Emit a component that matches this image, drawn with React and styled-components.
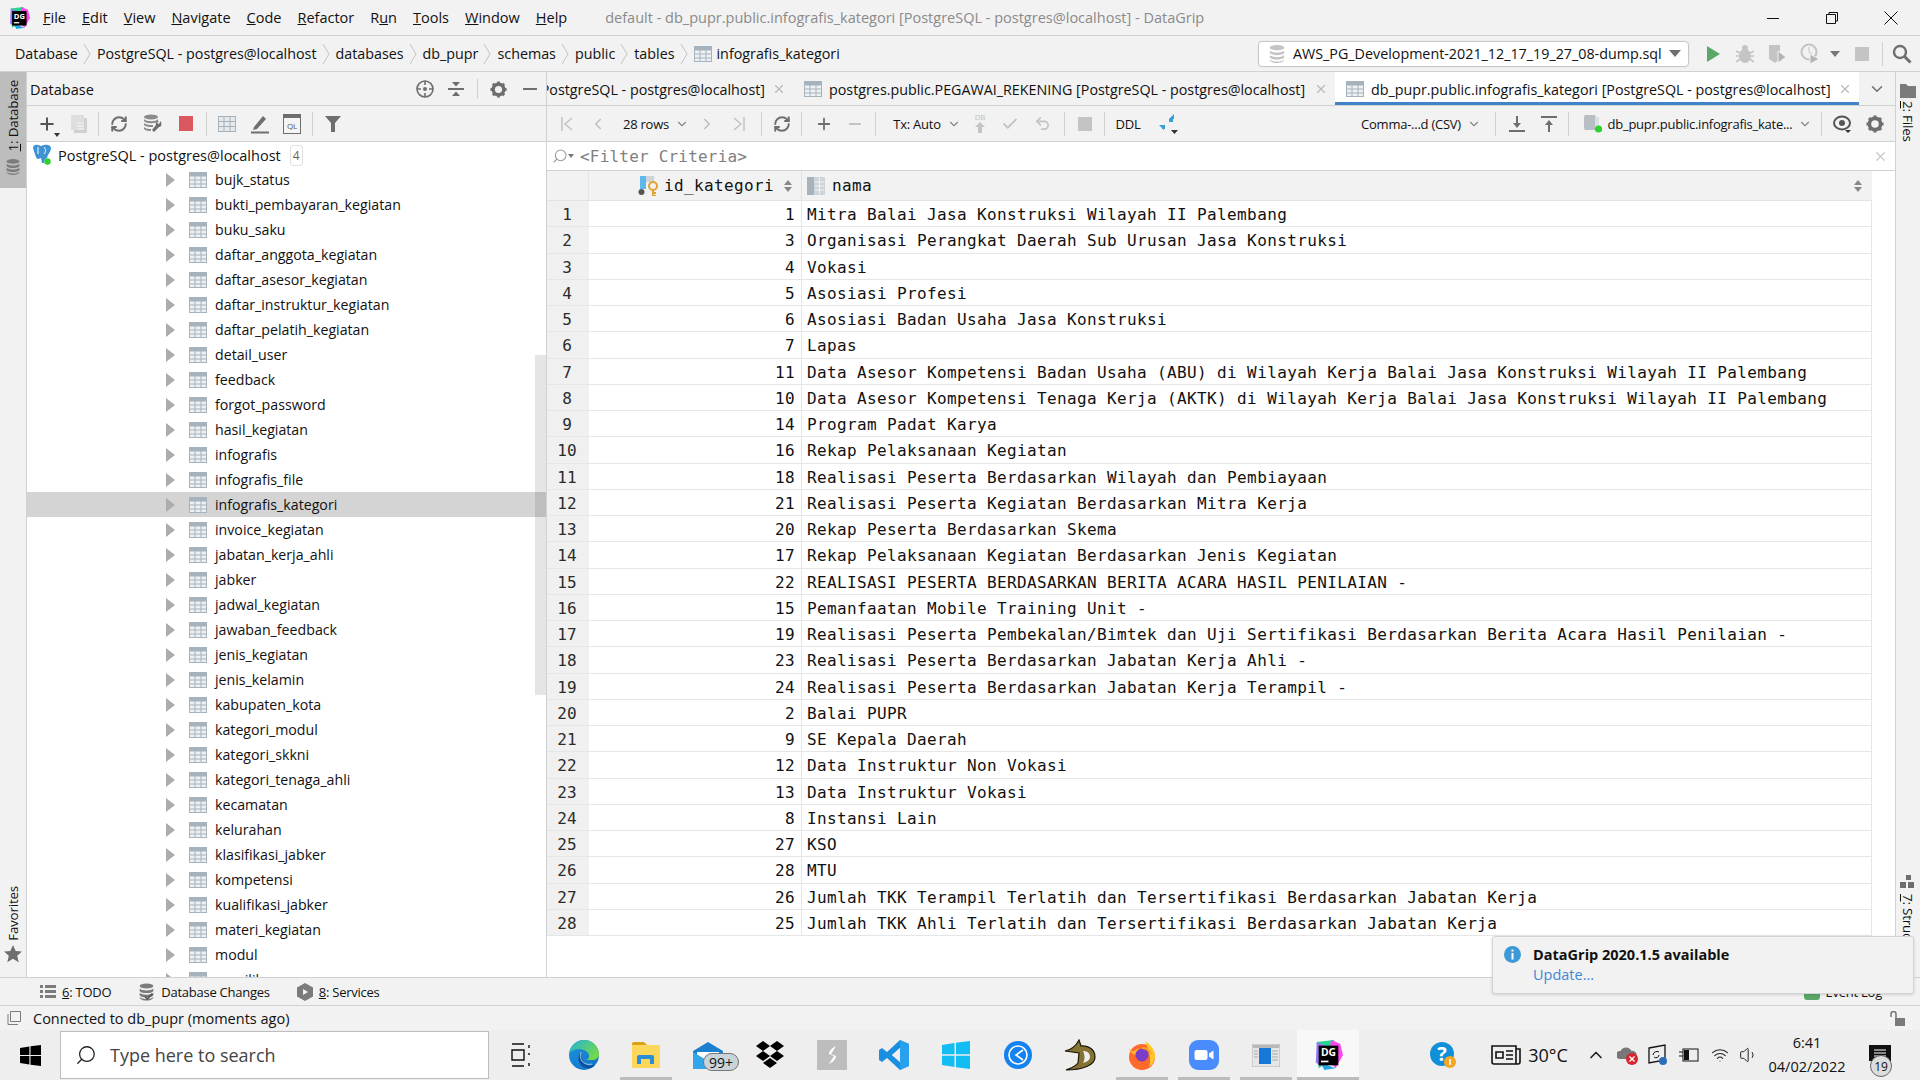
import React from 'react'
import styled, { createGlobalStyle } from 'styled-components'
import { ChevronDown, ChevronRight, ChevronLeft, Plus, Minus, RefreshCw, Check, Undo2, X, Search, ChevronUp, Volume1, Wifi } from 'lucide-react'

const UI = '"Open Sans", "Noto Sans", sans-serif'
const MONO = '"DejaVu Sans Mono", monospace'

const tables = ['bujk_status', 'bukti_pembayaran_kegiatan', 'buku_saku', 'daftar_anggota_kegiatan', 'daftar_asesor_kegiatan', 'daftar_instruktur_kegiatan', 'daftar_pelatih_kegiatan', 'detail_user', 'feedback', 'forgot_password', 'hasil_kegiatan', 'infografis', 'infografis_file', 'infografis_kategori', 'invoice_kegiatan', 'jabatan_kerja_ahli', 'jabker', 'jadwal_kegiatan', 'jawaban_feedback', 'jenis_kegiatan', 'jenis_kelamin', 'kabupaten_kota', 'kategori_modul', 'kategori_skkni', 'kategori_tenaga_ahli', 'kecamatan', 'kelurahan', 'klasifikasi_jabker', 'kompetensi', 'kualifikasi_jabker', 'materi_kegiatan', 'modul', 'pemilik']

const rows = [
  [1, 'Mitra Balai Jasa Konstruksi Wilayah II Palembang'],
  [3, 'Organisasi Perangkat Daerah Sub Urusan Jasa Konstruksi'],
  [4, 'Vokasi'],
  [5, 'Asosiasi Profesi'],
  [6, 'Asosiasi Badan Usaha Jasa Konstruksi'],
  [7, 'Lapas'],
  [11, 'Data Asesor Kompetensi Badan Usaha (ABU) di Wilayah Kerja Balai Jasa Konstruksi Wilayah II Palembang'],
  [10, 'Data Asesor Kompetensi Tenaga Kerja (AKTK) di Wilayah Kerja Balai Jasa Konstruksi Wilayah II Palembang'],
  [14, 'Program Padat Karya'],
  [16, 'Rekap Pelaksanaan Kegiatan'],
  [18, 'Realisasi Peserta Berdasarkan Wilayah dan Pembiayaan'],
  [21, 'Realisasi Peserta Kegiatan Berdasarkan Mitra Kerja'],
  [20, 'Rekap Peserta Berdasarkan Skema'],
  [17, 'Rekap Pelaksanaan Kegiatan Berdasarkan Jenis Kegiatan'],
  [22, 'REALISASI PESERTA BERDASARKAN BERITA ACARA HASIL PENILAIAN -'],
  [15, 'Pemanfaatan Mobile Training Unit -'],
  [19, 'Realisasi Peserta Pembekalan/Bimtek dan Uji Sertifikasi Berdasarkan Berita Acara Hasil Penilaian -'],
  [23, 'Realisasi Peserta Berdasarkan Jabatan Kerja Ahli -'],
  [24, 'Realisasi Peserta Berdasarkan Jabatan Kerja Terampil -'],
  [2, 'Balai PUPR'],
  [9, 'SE Kepala Daerah'],
  [12, 'Data Instruktur Non Vokasi'],
  [13, 'Data Instruktur Vokasi'],
  [8, 'Instansi Lain'],
  [27, 'KSO'],
  [28, 'MTU'],
  [26, 'Jumlah TKK Terampil Terlatih dan Tersertifikasi Berdasarkan Jabatan Kerja'],
  [25, 'Jumlah TKK Ahli Terlatih dan Tersertifikasi Berdasarkan Jabatan Kerja']
]

const GlobalStyle = createGlobalStyle`
  html, body { margin: 0; padding: 0; background: #f2f2f2; overflow: hidden; }
  * { box-sizing: border-box; }
  svg { flex: none; }
`

const Page = styled.div`
  position: relative;
  width: 1920px;
  height: 1080px;
  display: flex;
  flex-direction: column;
  overflow: hidden;
  font-family: ${UI};
  font-size: 14.5px;
  color: #111;
  background: #f2f2f2;
`
const TitleBar = styled.div`
  height: 36px;
  flex: none;
  display: flex;
  align-items: center;
  border-bottom: 1px solid #d1d1d1;
`
const AppIcon = styled.div`
  width: 43px;
  padding-left: 8px;
  display: flex;
`
const Menu = styled.div`
  display: flex;
  gap: 16px;
`
const WindowTitle = styled.div`
  margin-left: 38px;
  color: #8a8a8a;
  white-space: nowrap;
`
const WindowButtons = styled.div`
  margin-left: auto;
  display: flex;
  align-items: center;
`
const WindowButton = styled.div`
  width: 59px;
  display: flex;
  justify-content: center;
`
const NavBar = styled.div`
  height: 36px;
  flex: none;
  display: flex;
  align-items: center;
  padding-left: 15px;
  font-size: 14.3px;
  border-bottom: 1px solid #d1d1d1;
`
const Crumb = styled.span`
  display: flex;
  align-items: center;
  gap: 5px;
  white-space: nowrap;
`
const CrumbSep = styled.svg`
  width: 8px;
  height: 24px;
  margin: 0 6px 0 5px;
`
const RunGroup = styled.div`
  margin-left: auto;
  display: flex;
  align-items: center;
`
const RunConfig = styled.div`
  width: 431px;
  height: 26px;
  display: flex;
  align-items: center;
  gap: 7px;
  padding: 0 12px 0 9px;
  background: #fff;
  border: 1px solid #c8c8c8;
  border-radius: 4px;
  margin-right: 8px;
  white-space: nowrap;
  box-shadow: 0 0 0 1px #ececec;
`
const Caret = styled.span`
  width: 0;
  height: 0;
  flex: none;
  border-left: ${p => p.$s || 6}px solid transparent;
  border-right: ${p => p.$s || 6}px solid transparent;
  border-top: ${p => (p.$s || 6) + 1}px solid ${p => p.$c || '#6e6e6e'};
`
const RunCaret = styled(Caret)`
  margin-left: auto;
`
const Main = styled.div`
  flex: 1;
  min-height: 0;
  display: flex;
`
const Stripe = styled.div`
  width: ${p => p.$w}px;
  flex: none;
  display: flex;
  flex-direction: column;
  justify-content: space-between;
  font-size: 13.4px;
  letter-spacing: -0.2px;
  border-left: ${p => p.$line ? '1px solid #d1d1d1' : '0'};
`
const StripeButton = styled.div`
  display: flex;
  flex-direction: ${p => p.$rev ? 'column-reverse' : 'column'};
  align-items: center;
  gap: ${p => p.$gap || 5}px;
  height: ${p => p.$h}px;
  padding: ${p => p.$pad || '0'};
  overflow: hidden;
  background: ${p => p.$on ? '#bdbdbd' : 'transparent'};
`
const VerticalLabel = styled.span`
  writing-mode: vertical-rl;
  transform: ${p => p.$flip ? 'rotate(180deg)' : 'none'};
  white-space: nowrap;
`
const Panel = styled.div`
  width: 521px;
  flex: none;
  display: flex;
  flex-direction: column;
  border-left: 1px solid #d1d1d1;
  border-right: 1px solid #d1d1d1;
`
const PanelHeader = styled.div`
  height: 34px;
  flex: none;
  display: flex;
  align-items: center;
  padding: 1px 0 0 3px;
  border-bottom: 1px solid #d1d1d1;
`
const HeaderTools = styled.div`
  margin-left: auto;
  display: flex;
  align-items: center;
`
const ToolBar = styled.div`
  height: 36px;
  flex: none;
  display: flex;
  align-items: center;
  padding-left: ${p => p.$pl || 0}px;
  border-bottom: 1px solid #d1d1d1;
  white-space: nowrap;
  font-size: 13px;
  letter-spacing: -0.25px;
`
const Slot = styled.div`
  position: relative;
  width: ${p => p.$w || 32}px;
  flex: none;
  display: flex;
  align-items: center;
  justify-content: center;
  gap: 6px;
  margin-left: ${p => p.$ml || 0}px;
  margin-right: ${p => p.$mr || 0}px;
`
const MiniCaret = styled.span`
  position: absolute;
  right: 3px;
  bottom: -3px;
  width: 0;
  height: 0;
  border-left: 3px solid transparent;
  border-right: 3px solid transparent;
  border-top: 4px solid #333;
`
const Sep = styled.div`
  width: 1px;
  height: ${p => p.$h || 24}px;
  flex: none;
  background: #d1d1d1;
  margin: 0 ${p => p.$mr ?? 4}px 0 ${p => p.$ml ?? 4}px;
`
const Tree = styled.div`
  position: relative;
  flex: 1;
  min-height: 0;
  overflow: hidden;
  background: #fff;
  font-size: 14.2px;
`
const Scrollbar = styled.div`
  position: absolute;
  top: 213px;
  right: 0;
  width: 11px;
  height: 340px;
  background: rgba(0, 0, 0, 0.1);
`
const RootRow = styled.div`
  height: 25px;
  display: flex;
  align-items: center;
  gap: 6px;
  padding: 1px 0 0 5px;
  font-size: 14.5px;
  white-space: nowrap;
`
const CountBadge = styled.span`
  width: 13px;
  height: 21px;
  margin-left: 3px;
  display: flex;
  align-items: center;
  justify-content: center;
  font-size: 12px;
  color: #6f6250;
  border: 1px solid #e0e0e0;
  border-radius: 3px;
`
const TreeRow = styled.div`
  height: 25px;
  display: flex;
  align-items: center;
  padding-left: 139px;
  background: ${p => p.$selected ? '#d4d4d4' : 'transparent'};
`
const Arrow = styled.span`
  width: 0;
  height: 0;
  margin-right: 14px;
  border-top: 7px solid transparent;
  border-bottom: 7px solid transparent;
  border-left: 9px solid #acacac;
`
const TreeLabel = styled.span`
  margin-left: 8px;
`
const Editor = styled.div`
  flex: 1;
  min-width: 0;
  display: flex;
  flex-direction: column;
`
const TabBar = styled.div`
  height: 34px;
  flex: none;
  display: flex;
  border-bottom: 1px solid #d1d1d1;
`
const Tabs = styled.div`
  width: 1312px;
  display: flex;
  justify-content: flex-end;
  overflow: hidden;
  font-size: 14.3px;
`
const Tab = styled.div`
  flex: none;
  height: 34px;
  display: flex;
  align-items: center;
  gap: 7px;
  padding: 0 7px 0 11px;
  white-space: nowrap;
  background: ${p => p.$active ? '#fff' : 'transparent'};
  box-shadow: ${p => p.$active ? 'inset 0 -4px 0 #4083c9' : 'none'};
`
const TabText = styled.span`
  width: ${p => p.$w ? p.$w + 'px' : 'auto'};
  display: block;
`
const TabMenu = styled.div`
  flex: 1;
  display: flex;
  align-items: center;
  justify-content: center;
`
const EditorTools = styled(ToolBar)`
  padding-left: 4px;
`
const RightTools = styled.div`
  margin-left: auto;
  display: flex;
  align-items: center;
`
const FilterBar = styled.div`
  height: 29px;
  flex: none;
  display: flex;
  align-items: center;
  padding: 0 7px 0 5px;
  background: #fff;
  border-bottom: 1px solid #d1d1d1;
  font-family: ${MONO};
  font-size: 16px;
  letter-spacing: 0.2px;
  color: #808080;
`
const FilterText = styled.span`
  margin-left: 6px;
`
const FilterClose = styled.span`
  margin-left: auto;
  display: flex;
`
const FlipSearch = styled(Search)`
  transform: scaleX(-1);
`
const Grid = styled.div`
  flex: 1;
  min-height: 0;
  background: #fff;
  font-family: ${MONO};
  font-size: 16px;
  letter-spacing: 0.37px;
`
const HeadRow = styled.div`
  height: 30px;
  width: 1325px;
  display: flex;
  background: #f2f2f2;
  border-bottom: 1px solid #e2e2e2;
`
const Row = styled.div`
  height: 26.25px;
  display: flex;
  width: 1325px;
`
const Gutter = styled.div`
  width: 42px;
  flex: none;
  display: flex;
  align-items: center;
  justify-content: center;
  padding: 2px 2px 0 0;
  letter-spacing: 0;
  color: #2b2b2b;
  background: #f0f0f0;
  border-bottom: 1px solid #e6e6e6;
`
const IdCell = styled.div`
  width: 213px;
  flex: none;
  display: flex;
  align-items: center;
  justify-content: flex-end;
  padding: 2px 6px 0 0;
  border-right: 1px solid #e6e6e6;
  border-bottom: 1px solid #e6e6e6;
`
const NameCell = styled.div`
  flex: 1;
  display: flex;
  align-items: center;
  padding: 2px 0 0 5px;
  white-space: nowrap;
  border-right: 1px solid #e6e6e6;
  border-bottom: 1px solid #e6e6e6;
`
const HeadId = styled.div`
  width: 213px;
  flex: none;
  display: flex;
  align-items: center;
  justify-content: flex-end;
  gap: 6px;
  padding-right: 9px;
  border-right: 1px solid #e2e2e2;
`
const HeadGutter = styled.div`
  width: 42px;
  flex: none;
  border-right: 1px solid #e6e6e6;
`
const HeadName = styled.div`
  flex: 1;
  display: flex;
  align-items: center;
  gap: 7px;
  padding: 0 10px 0 5px;
`
const SortIcon = styled.svg`
  width: 8px;
  height: 12px;
  margin-left: ${p => p.$auto ? 'auto' : '4px'};
  fill: #888;
`
const BottomBar = styled.div`
  height: 28px;
  flex: none;
  display: flex;
  align-items: center;
  padding-left: 40px;
  gap: 27px;
  border-top: 1px solid #d1d1d1;
  font-size: 13px;
  letter-spacing: -0.25px;
`
const BottomItem = styled.div`
  display: flex;
  align-items: center;
  gap: 6px;
  white-space: nowrap;
`
const EventLog = styled(BottomItem)`
  margin-left: auto;
  padding-right: 38px;
`
const StatusBar = styled.div`
  height: 25px;
  flex: none;
  display: flex;
  align-items: center;
  gap: 12px;
  padding: 0 15px 0 7px;
  border-top: 1px solid #d1d1d1;
`
const LockSlot = styled.span`
  margin-left: auto;
  display: flex;
`
const Popup = styled.div`
  position: absolute;
  left: 1492px;
  top: 936px;
  width: 422px;
  height: 58px;
  padding: 8px 11px;
  display: grid;
  grid-template-columns: 29px 1fr;
  background: #f2f2f2;
  border: 1px solid #d4d4d4;
  border-radius: 3px;
  box-shadow: 0 1px 3px rgba(0, 0, 0, 0.15);
`
const PopupIcon = styled.svg`
  width: 17px;
  height: 17px;
  margin-top: 1px;
`
const PopupTitle = styled.div`
  font-weight: 700;
  line-height: 20px;
`
const PopupLink = styled.div`
  grid-column: 2;
  color: #3f86d4;
  line-height: 20px;
`
const Taskbar = styled.div`
  height: 50px;
  flex: none;
  display: flex;
  background: #eeeeee;
`
const StartButton = styled.div`
  width: 60px;
  display: flex;
  align-items: center;
  justify-content: center;
`
const SearchBox = styled.div`
  width: 429px;
  height: 48px;
  margin-top: 1px;
  display: flex;
  align-items: center;
  gap: 13px;
  padding-left: 14px;
  background: #fff;
  border: 1px solid #bdbdbd;
  font-size: 18px;
  color: #444;
`
const TaskCell = styled.div`
  position: relative;
  width: ${p => p.$w || 62}px;
  flex: none;
  display: flex;
  align-items: center;
  justify-content: center;
  background: ${p => p.$active ? '#f8f8f8' : 'transparent'};
  &::after {
    content: '';
    display: ${p => p.$open ? 'block' : 'none'};
    position: absolute;
    left: ${p => p.$active ? 0 : 5}px;
    right: ${p => p.$active ? 0 : 5}px;
    bottom: 0;
    height: 3px;
    background: #bcbcbc;
  }
`
const Badge = styled.span`
  position: absolute;
  left: 26px;
  bottom: 9px;
  width: 36px;
  height: 18px;
  display: flex;
  align-items: center;
  justify-content: center;
  border-radius: 9px;
  border: 1px solid #777;
  background: #c9d3da;
  font-size: 14px;
  color: #111;
`
const Tray = styled.div`
  margin-left: auto;
  padding-right: 12px;
  display: flex;
  align-items: center;
  font-size: 18px;
`
const TrayItem = styled.div`
  width: ${p => p.$w}px;
  flex: none;
  display: flex;
  justify-content: center;
  align-items: center;
  position: relative;
  margin-left: ${p => p.$ml || 0}px;
`
const Clock = styled.div`
  width: 90px;
  text-align: center;
  font-size: 14.5px;
  line-height: 24px;
`
const NotifyCount = styled.span`
  position: absolute;
  left: 18px;
  top: 10px;
  width: 22px;
  height: 22px;
  display: flex;
  align-items: center;
  justify-content: center;
  border-radius: 50%;
  border: 1px solid #666;
  background: #ddd;
  font-size: 12px;
`

const TableIcon = () => (
  <svg width="18" height="16" viewBox="0 0 18 16">
    <rect width="18" height="16" fill="#a6b2bc" />
    <path d="M1 4.5h4.5v3H1zM6.5 4.5h5v3h-5zM12.5 4.5H17v3h-4.5zM1 8.5h4.5v3H1zM6.5 8.5h5v3h-5zM12.5 8.5H17v3h-4.5zM1 12.5h4.5V15H1zM6.5 12.5h5V15h-5zM12.5 12.5H17V15h-4.5z" fill="#eef1f3" />
  </svg>
)
const LogoDG = ({ s = 22 }) => (
  <svg width={s} height={s} viewBox="0 0 32 32">
    <polygon points="4,2 22,0 27,7 18,22 6,30" fill="#22d88f" />
    <polygon points="19,0 29,4 32,16 24,30 17,22" fill="#ff45ed" />
    <polygon points="4,2 14,6 8,28 3,24" fill="#9775f8" />
    <polygon points="8,24 24,30 12,32" fill="#1fa8e8" />
    <rect x="6" y="6" width="21" height="21" fill="#000" />
    <text x="16.5" y="17" textAnchor="middle" fontSize="11" fontWeight="700" fill="#fff" fontFamily="Open Sans, sans-serif">DG</text>
    <rect x="8.5" y="22" width="8" height="1.8" fill="#fff" />
  </svg>
)
const Elephant = () => (
  <svg width="20" height="22" viewBox="0 0 20 22">
    <path d="M1 4c0-3 3-4 5-3l3 1 3-1c3-1 7 0 7 3 0 3-2 5-3 7l-1 3-2 1-1 4-2 0-1-5-3 1c-2 0-3-5-5-11z" fill="#3e92d6" />
    <path d="M6 3v7M12 3c2 2 2 5 0 7" stroke="#fff" strokeWidth="1" fill="none" />
    <circle cx="15.5" cy="17.5" r="3.2" fill="#2fd12f" />
  </svg>
)
const DbStack = ({ c = '#8e8e8e', w = 20, h = 22, check }) => (
  <svg width={w} height={h} viewBox="0 0 20 22">
    <ellipse cx="10" cy="4" rx="8" ry="3" fill={c} />
    <path d="M2 7c2 3 14 3 16 0v3c-2 3-14 3-16 0zM2 12c2 3 14 3 16 0v3c-2 3-14 3-16 0zM2 17c2 3 14 3 16 0v1c-2 4-14 4-16 0z" fill={c} />
    {check && <path d="M8 16l3 3 6-6" stroke="#555" strokeWidth="2" fill="none" />}
  </svg>
)
const GearIcon = ({ s = 18, c = '#6e6e6e' }) => (
  <svg width={s} height={s} viewBox="0 0 18 18">
    <circle cx="9" cy="9" r="5.6" fill="none" stroke={c} strokeWidth="3.6" />
    <path d="M9 0.5v3.5M9 14v3.5M0.5 9H4M14 9h3.5M3 3l2.5 2.5M12.5 12.5L15 15M15 3l-2.5 2.5M5.5 12.5L3 15" stroke={c} strokeWidth="3" />
  </svg>
)

const EdgeIcon = () => (
  <svg width="32" height="32" viewBox="0 0 32 32">
    <defs>
      <linearGradient id="edgeA" x1="0" y1="0" x2="1" y2="0.6"><stop offset="0" stopColor="#1fb4d8" /><stop offset="1" stopColor="#74d84a" /></linearGradient>
      <linearGradient id="edgeB" x1="0" y1="0" x2="1" y2="1"><stop offset="0" stopColor="#1c95e0" /><stop offset="1" stopColor="#1070c4" /></linearGradient>
    </defs>
    <circle cx="16" cy="16" r="15" fill="url(#edgeB)" />
    <path d="M1.5 13C3 6 9 1 16 1c8 0 15 6 15 14 0 4-3 6-7 6h-6c3-1 4-4 2-7-3-4-10-5-14-3-3 1-4 3-4.5 2z" fill="url(#edgeA)" />
    <path d="M13 13c-3 3-4 9 1 14 4 3 10 3 13-1-5 2-10 0-12-4-2-3-2-6-2-9z" fill="#0b4f9e" />
    <path d="M13 13c-1 3-1 6 1 9 2 3 6 4 10 3" fill="none" stroke="#dfeef5" strokeWidth="1" opacity=".7" />
  </svg>
)
const FolderIcon = () => (
  <svg width="28" height="26" viewBox="0 0 28 26">
    <path d="M0 2a2 2 0 012-2h10l3 3H0z" fill="#dba20f" />
    <rect y="3" width="28" height="23" rx="1" fill="#fdd65c" />
    <path d="M5 22v-7a2 2 0 012-2h13a2 2 0 012 2v7h-4v-5h-9v5z" fill="#2a8fd8" />
  </svg>
)
const MailIcon = () => (
  <svg width="30" height="27" viewBox="0 0 30 27">
    <path d="M0 9L15 0l15 9v18H0z" fill="#1c7fd0" />
    <path d="M4 10h22v6l-11 6-11-6z" fill="#fff" />
    <path d="M0 10l15 9 15-9v17H0z" fill="#33a6ea" />
  </svg>
)
const DropboxIcon = () => (
  <svg width="30" height="28" viewBox="0 0 30 28" fill="#000">
    <polygon points="8,0 15,5 8,10 1,5" />
    <polygon points="22,0 29,5 22,10 15,5" />
    <polygon points="8,10 15,15 8,20 1,15" />
    <polygon points="22,10 29,15 22,20 15,15" />
    <polygon points="15,17 22,22 15,27 8,22" />
  </svg>
)
const SublimeIcon = () => (
  <svg width="30" height="30" viewBox="0 0 30 30">
    <rect width="30" height="30" fill="#bdbdbd" />
    <path d="M19 6c-4 2-7 5-7 8l5 2-5 8c4-2 7-5 7-8l-5-2z" fill="#fff" />
  </svg>
)
const VscodeIcon = () => (
  <svg width="30" height="30" viewBox="0 0 30 30">
    <path d="M21 0l9 4v22l-9 4-13-12-5 4-3-2v-10l3-2 5 4zM21 8l-8 7 8 7z" fill="#1a8ee0" />
    <path d="M21 0l9 4v22l-9 4z" fill="#2aa5f0" opacity=".8" />
    <path d="M21 8l-8 7 8 7z" fill="#eee" />
  </svg>
)
const WinIcon = ({ s = 28, c = '#11bdf2' }) => (
  <svg width={s} height={s} viewBox="0 0 28 28" fill={c}>
    <polygon points="0,4 12.5,2 12.5,13.2 0,13.2" />
    <polygon points="14,1.8 28,0 28,13.2 14,13.2" />
    <polygon points="0,14.8 12.5,14.8 12.5,26 0,24" />
    <polygon points="14,14.8 28,14.8 28,28 14,26.2" />
  </svg>
)
const CircleApp = () => (
  <svg width="28" height="28" viewBox="0 0 28 28">
    <circle cx="14" cy="14" r="14" fill="#1583ef" />
    <circle cx="14" cy="14" r="9" fill="none" stroke="#fff" strokeWidth="1.6" />
    <path d="M19 9l-7 5 7 5" stroke="#fff" strokeWidth="1.6" fill="none" />
  </svg>
)
const GoldIcon = () => (
  <svg width="32" height="32" viewBox="0 0 32 32">
    <path d="M15 1l2 6c8-1 14 4 14 11 0 8-12 13-29 13 5-2 9-3 12-7l1-10L1 12c5-1 10-3 14-11z" fill="#857234" stroke="#1c1606" strokeWidth="1.2" />
    <path d="M19 12c4 0 7 2 7 6 0 3-3 5-7 6 2-3 2-8 0-12z" fill="#eeeeee" />
  </svg>
)
const FirefoxIcon = () => (
  <svg width="30" height="30" viewBox="0 0 30 30">
    <circle cx="15" cy="17" r="13" fill="#ff6a2a" />
    <path d="M18 1c5 3 11 9 10 17-1 4-3 7-6 9 3-8 0-16-4-26z" fill="#ffc62e" />
    <path d="M2 8c2 3 3 3 5 3 3-3 6-3 9-2-4 0-7 3-6 5-3 2-7-1-8-6z" fill="#ffb22e" />
    <circle cx="15" cy="15" r="6.5" fill="#7a3dc8" />
    <path d="M15 7c5 0 9 3 10 8-3-4-6-6-10-6z" fill="#ff9a1c" />
  </svg>
)
const ZoomIcon = () => (
  <svg width="30" height="30" viewBox="0 0 30 30">
    <rect width="30" height="30" rx="9" fill="#4a8cff" />
    <rect x="5.5" y="10" width="13" height="10" rx="2" fill="#fff" />
    <path d="M20 13.5l4.5-3v9l-4.5-3z" fill="#fff" />
  </svg>
)
const WindowAppIcon = () => (
  <svg width="28" height="23" viewBox="0 0 28 23">
    <rect width="28" height="23" fill="#e6e6e6" stroke="#b4b4b4" />
    <rect x="1" y="1" width="26" height="3" fill="#b8b8b8" />
    <rect x="7" y="4" width="12" height="16" fill="#1679d8" />
    <path d="M2 7h4M2 10h4M2 13h4M20 7h6M20 10h6M20 13h6M20 16h6" stroke="#aaa" strokeWidth="1" />
  </svg>
)

const menu = [['F', 'ile'], ['E', 'dit'], ['V', 'iew'], ['N', 'avigate'], ['C', 'ode'], ['R', 'efactor'], ['Ru', 'n', 1], ['T', 'ools'], ['W', 'indow'], ['H', 'elp']]
const crumbs = ['Database', 'PostgreSQL - postgres@localhost', 'databases', 'db_pupr', 'schemas', 'public', 'tables']

const Sep1 = () => (
  <CrumbSep viewBox="0 0 8 24"><path d="M1 2l6 10-6 10" stroke="#c4c4c4" fill="none" /></CrumbSep>
)

export default function App () {
  return (
    <Page>
      <GlobalStyle />
      <TitleBar>
        <AppIcon><LogoDG /></AppIcon>
        <Menu>
          {menu.map(m => (
            <span key={m[0]}>
              {m[2] ? <>R<u>u</u>n</> : <><u>{m[0]}</u>{m[1]}</>}
            </span>
          ))}
        </Menu>
        <WindowTitle>default - db_pupr.public.infografis_kategori [PostgreSQL - postgres@localhost] - DataGrip</WindowTitle>
        <WindowButtons>
          <WindowButton><svg width="14" height="14"><path d="M1 7.5h12" stroke="#111" /></svg></WindowButton>
          <WindowButton><svg width="14" height="14"><path d="M1.5 3.5h9v9h-9zM4 3V1.5h8.5V10H11" stroke="#111" fill="none" /></svg></WindowButton>
          <WindowButton><svg width="16" height="16"><path d="M1.5 1.5l13 13M14.5 1.5l-13 13" stroke="#111" /></svg></WindowButton>
        </WindowButtons>
      </TitleBar>

      <NavBar>
        {crumbs.map(c => (
          <React.Fragment key={c}>
            <Crumb>{c}</Crumb>
            <Sep1 />
          </React.Fragment>
        ))}
        <Crumb><TableIcon />infografis_kategori</Crumb>
        <RunGroup>
          <RunConfig>
            <DbStack c="#c4c4c4" h={20} w={18} />
            AWS_PG_Development-2021_12_17_19_27_08-dump.sql
            <RunCaret />
          </RunConfig>
          <Slot $w={31}><svg width="14" height="18"><path d="M1 1l13 8-13 8z" fill="#59a869" /></svg></Slot>
          <Slot $w={33}>
            <svg width="18" height="20" viewBox="0 0 18 20"><ellipse cx="9" cy="12" rx="6" ry="7" fill="#c4c4c4" /><circle cx="9" cy="4" r="3" fill="#c4c4c4" /><path d="M0 7l4 2M18 7l-4 2M0 12h4M14 12h4M0 18l4-3M18 18l-4-3" stroke="#c4c4c4" strokeWidth="1.6" /></svg>
          </Slot>
          <Slot $w={33}>
            <svg width="20" height="20" viewBox="0 0 20 20"><path d="M1 1h11v14l-5 4-6-4z" fill="#c4c4c4" /><path d="M10 7l8 6-8 6z" fill="#b4b4b4" stroke="#f2f2f2" /></svg>
          </Slot>
          <Slot $w={34}>
            <svg width="22" height="22" viewBox="0 0 22 22"><circle cx="9" cy="9" r="7.5" fill="none" stroke="#c4c4c4" strokeWidth="2" /><path d="M9 4v5l3 2" stroke="#c4c4c4" fill="none" /><path d="M10 11l9 5-9 5z" fill="#b4b4b4" stroke="#f2f2f2" /></svg>
          </Slot>
          <Slot $w={14}><Caret $s={5} $c="#777" /></Slot>
          <Slot $w={40}><svg width="14" height="14"><rect width="14" height="14" fill="#c4c4c4" /></svg></Slot>
          <Sep $h={24} $ml={0} $mr={0} />
          <Slot $w={37}><svg width="20" height="20" viewBox="0 0 20 20"><circle cx="8" cy="8" r="6" fill="none" stroke="#6e6e6e" strokeWidth="2.4" /><path d="M12.5 12.5l6 6" stroke="#6e6e6e" strokeWidth="3" /></svg></Slot>
        </RunGroup>
      </NavBar>

      <Main>
        <Stripe $w={26}>
          <StripeButton $on $h={116} $rev $pad="0 0 11px" $gap={6}>
            <DbStack c="#7c7c7c" w={16} h={20} />
            <VerticalLabel $flip><u>1</u>: Database</VerticalLabel>
          </StripeButton>
          <StripeButton $rev $h={92} $pad="0 0 14px" $gap={4}>
            <svg width="18" height="18" viewBox="0 0 18 18"><path d="M9 0l2.7 6 6.3.6-4.8 4.2 1.5 6.4L9 13.8l-5.7 3.4 1.5-6.4L0 6.6 6.3 6z" fill="#6e6e6e" /></svg>
            <VerticalLabel $flip>Favorites</VerticalLabel>
          </StripeButton>
        </Stripe>

        <Panel>
          <PanelHeader>
            Database
            <HeaderTools>
              <Slot $w={30}><svg width="18" height="18" viewBox="0 0 18 18"><circle cx="9" cy="9" r="8" fill="none" stroke="#6e6e6e" strokeWidth="1.6" /><circle cx="9" cy="9" r="2" fill="#6e6e6e" /><path d="M9 1v4M9 13v4M1 9h4M13 9h4" stroke="#6e6e6e" strokeWidth="1.6" /></svg></Slot>
              <Slot $w={32}><svg width="16" height="16" viewBox="0 0 16 16" fill="#6e6e6e"><rect y="7" width="16" height="2" /><path d="M8 5.5L4 1h8zM8 10.5L4 15h8z" /></svg></Slot>
              <Sep $h={20} $ml={5} $mr={8} />
              <Slot $w={24} $mr={4}><GearIcon s={17} /></Slot>
              <Slot $w={32}><svg width="14" height="3"><rect width="14" height="2" fill="#6e6e6e" /></svg></Slot>
            </HeaderTools>
          </PanelHeader>
          <ToolBar $pl={4}>
            <Slot>
              <Plus size={20} color="#555" strokeWidth={2.4} />
              <MiniCaret />
            </Slot>
            <Slot><svg width="16" height="18" viewBox="0 0 16 18"><rect x="3" y="3" width="13" height="15" fill="#d0d0d0" /><rect width="13" height="15" fill="#dedede" /><path d="M6 8h7M6 11h7M6 14h7" stroke="#f4f4f4" /></svg></Slot>
            <Sep $ml={3} />
            <Slot><RefreshCw size={18} color="#6e6e6e" strokeWidth={2.6} /></Slot>
            <Slot $w={35}>
              <svg width="20" height="20" viewBox="0 0 20 20"><ellipse cx="8" cy="3" rx="7" ry="2.5" fill="#8a8a8a" /><path d="M1 5c2 3 12 3 14 0v2c-2 3-12 3-14 0zM1 9c2 2 7 2 9 2v2c-3 0-7 0-9-2zM1 13c2 2 5 2 7 2v2c-2 0-5 0-7-2z" fill="#8a8a8a" /><path d="M18 7l-2 3-2-1 2-2c-2 0-4 2-3 4l-4 5 2 2 5-5c2 0 3-2 2-6z" fill="#6e6e6e" /></svg>
            </Slot>
            <Slot><svg width="14" height="15"><rect width="14" height="15" fill="#db5860" /></svg></Slot>
            <Sep />
            <Slot><svg width="18" height="16" viewBox="0 0 18 16"><rect width="18" height="16" fill="#a6b2bc" /><path d="M1 1h4.5v4H1zM6.5 1h5v4h-5zM12.5 1H17v4h-4.5zM1 6h4.5v4H1zM6.5 6h5v4h-5zM12.5 6H17v4h-4.5zM1 11h4.5v4H1zM6.5 11h5v4h-5zM12.5 11H17v4h-4.5z" fill="#e6eaed" /></svg></Slot>
            <Slot $w={33}><svg width="18" height="20" viewBox="0 0 18 20"><path d="M3 13L12 2l3 3-9 10-4 1z" fill="#6e6e6e" /><rect y="17.5" width="18" height="2" fill="#6e6e6e" /></svg></Slot>
            <Slot><svg width="18" height="20" viewBox="0 0 18 20"><rect x=".5" y=".5" width="17" height="19" fill="#f4f4f4" stroke="#6e6e6e" /><rect width="18" height="4" fill="#6e6e6e" /><text x="9" y="15" fontSize="8" textAnchor="middle" fill="#555" fontFamily="Open Sans, sans-serif">QL</text></svg></Slot>
            <Sep />
            <Slot><svg width="16" height="16" viewBox="0 0 16 16"><path d="M0 0h16l-6 7v9H6V7z" fill="#6e6e6e" /></svg></Slot>
          </ToolBar>
          <Tree>
            <RootRow>
              <Elephant />
              PostgreSQL - postgres@localhost
              <CountBadge>4</CountBadge>
            </RootRow>
            {tables.map(t => (
              <TreeRow key={t} $selected={t === 'infografis_kategori'}>
                <Arrow />
                <TableIcon />
                <TreeLabel>{t}</TreeLabel>
              </TreeRow>
            ))}
            <Scrollbar />
          </Tree>
        </Panel>

        <Editor>
          <TabBar>
            <Tabs>
              <Tab>
                <TableIcon />
                <TabText>postgres.public.TABEL [PostgreSQL - postgres@localhost]</TabText>
                <X size={14} color="#b8b8b8" />
              </Tab>
              <Tab>
                <TableIcon />
                <TabText $w={478}>postgres.public.PEGAWAI_REKENING [PostgreSQL - postgres@localhost]</TabText>
                <X size={14} color="#b8b8b8" />
              </Tab>
              <Tab $active>
                <TableIcon />
                <TabText $w={460}>db_pupr.public.infografis_kategori [PostgreSQL - postgres@localhost]</TabText>
                <X size={14} color="#b8b8b8" />
              </Tab>
            </Tabs>
            <TabMenu><ChevronDown size={18} color="#6e6e6e" strokeWidth={2} /></TabMenu>
          </TabBar>
          <EditorTools>
            <Slot $w={31}><svg width="12" height="14"><path d="M1 0v14M11 1L4 7l7 6" stroke="#c0c0c0" strokeWidth="1.4" fill="none" /></svg></Slot>
            <Slot $w={31}><ChevronLeft size={18} color="#bdbdbd" /></Slot>
            <Slot $w={76} $ml={5}>28 rows <ChevronDown size={14} color="#888" /></Slot>
            <Slot $w={26}><ChevronRight size={18} color="#bdbdbd" /></Slot>
            <Slot $w={38}><svg width="12" height="14"><path d="M11 0v14M1 1l7 6-7 6" stroke="#c0c0c0" strokeWidth="1.4" fill="none" /></svg></Slot>
            <Sep $ml={3} $mr={0} />
            <Slot $w={39}><RefreshCw size={18} color="#6e6e6e" strokeWidth={2.6} /></Slot>
            <Sep $ml={0} $mr={0} />
            <Slot $w={43}><Plus size={18} color="#6e6e6e" strokeWidth={2.4} /></Slot>
            <Slot $w={20}><Minus size={18} color="#c4c4c4" strokeWidth={2.4} /></Slot>
            <Sep $ml={10} $mr={13} />
            <Slot $w={76}>Tx: Auto <ChevronDown size={14} color="#888" /></Slot>
            <Slot $w={30}>
              <svg width="16" height="22" viewBox="0 0 16 22"><text x="8" y="7" fontSize="8" textAnchor="middle" fill="#c0c0c0" fontFamily="Open Sans, sans-serif">DB</text><path d="M8 9l5 5h-3v6H6v-6H3z" fill="#c4c4c4" /></svg>
            </Slot>
            <Slot $w={30}><Check size={18} color="#c4c4c4" strokeWidth={2.4} /></Slot>
            <Slot $w={34}><Undo2 size={17} color="#c4c4c4" strokeWidth={2.4} /></Slot>
            <Sep $ml={5} $mr={0} />
            <Slot $w={39}><svg width="14" height="14"><rect width="14" height="14" fill="#c4c4c4" /></svg></Slot>
            <Sep $ml={0} $mr={0} />
            <Slot $w={46}>DDL</Slot>
            <Slot $w={34}>
              <svg width="22" height="22" viewBox="0 0 22 22"><path d="M17 1v5h-5zM12 6h4v3h-4z" fill="#389fd6" /><path d="M2 12h5v5zM5 12h3v4H5z" fill="#389fd6" /><path d="M14 17h7l-3.5 4z" fill="#333" /></svg>
            </Slot>
            <RightTools>
              <Slot $w={140} $mr={4}>Comma-...d (CSV) <ChevronDown size={14} color="#888" /></Slot>
              <Sep $ml={0} $mr={1} />
              <Slot $w={39}><svg width="16" height="16" viewBox="0 0 16 16" fill="#6e6e6e"><path d="M7 0h2v7h3l-4 5-4-5h3z" /><rect y="14" width="16" height="2" /></svg></Slot>
              <Slot $w={26}><svg width="16" height="16" viewBox="0 0 16 16" fill="#6e6e6e"><rect width="16" height="2" /><path d="M8 4l4 5H9v7H7V9H4z" /></svg></Slot>
              <Sep $ml={6} $mr={10} />
              <Slot $w={28}><svg width="20" height="20" viewBox="0 0 20 20"><rect x="1" y="1" width="12" height="15" rx="2" fill="#b8bfc4" /><rect x="12" y="3" width="4" height="11" fill="#dcdfe1" /><circle cx="15.5" cy="15" r="3.6" fill="#2fd12f" /></svg></Slot>
              <Slot $w={206}>db_pupr.public.infografis_kate... <ChevronDown size={14} color="#888" /></Slot>
              <Sep $ml={8} $mr={4} />
              <Slot $w={34}>
                <svg width="20" height="20" viewBox="0 0 20 20"><ellipse cx="9" cy="9" rx="8" ry="6.5" fill="none" stroke="#555" strokeWidth="2" /><circle cx="9" cy="9" r="3" fill="#555" /><path d="M12 16h6l-3 3z" fill="#333" /></svg>
              </Slot>
              <Slot $w={30} $mr={5}><GearIcon s={18} /></Slot>
            </RightTools>
          </EditorTools>
          <FilterBar>
            <FlipSearch size={16} color="#9a9a9a" strokeWidth={1.6} />
            <Caret $s={3} $c="#777" />
            <FilterText>&lt;Filter Criteria&gt;</FilterText>
            <FilterClose><X size={15} color="#c8c8c8" /></FilterClose>
          </FilterBar>
          <Grid>
            <HeadRow>
              <HeadGutter />
              <HeadId>
                <svg width="20" height="20" viewBox="0 0 20 20">
                  <rect x="2" width="6" height="13" fill="#5fb8ec" />
                  <rect x="8" width="8" height="6" fill="#cfd4d8" />
                  <circle cx="3.5" cy="16" r="3" fill="#555" />
                  <circle cx="15" cy="10" r="4" fill="none" stroke="#e3a32c" strokeWidth="2" />
                  <path d="M15 14v6M15 17h3M15 20h3" stroke="#e3a32c" strokeWidth="2" />
                </svg>
                id_kategori
                <SortIcon viewBox="0 0 8 12"><path d="M4 0l4 5H0zM4 12L0 7h8z" /></SortIcon>
              </HeadId>
              <HeadName>
                <svg width="18" height="18" viewBox="0 0 18 18">
                  <rect width="18" height="18" fill="#cfd4d8" />
                  <rect width="7" height="18" fill="#a6b2bc" />
                  <path d="M8 5h9M8 9h9M8 13h9M12.5 1v16" stroke="#f2f2f2" />
                </svg>
                nama
                <SortIcon $auto viewBox="0 0 8 12"><path d="M4 0l4 5H0zM4 12L0 7h8z" /></SortIcon>
              </HeadName>
            </HeadRow>
            {rows.map((r, i) => (
              <Row key={r[0]}>
                <Gutter>{i + 1}</Gutter>
                <IdCell>{r[0]}</IdCell>
                <NameCell>{r[1]}</NameCell>
              </Row>
            ))}
          </Grid>
        </Editor>

        <Stripe $w={25} $line>
          <StripeButton $h={90} $pad="12px 0 0" $gap={3}>
            <svg width="16" height="14" viewBox="0 0 16 14"><path d="M0 0h6l2 2h8v12H0z" fill="#7b7b7b" /></svg>
            <VerticalLabel><u>2</u>: Files</VerticalLabel>
          </StripeButton>
          <StripeButton $h={102} $gap={3}>
            <svg width="16" height="16" viewBox="0 0 16 16" fill="#6e6e6e"><rect x="6" width="5" height="5" /><rect y="7" width="6" height="6" /><rect x="8" y="7" width="6" height="6" /></svg>
            <VerticalLabel><u>7</u>: Structure</VerticalLabel>
          </StripeButton>
        </Stripe>
      </Main>

      <BottomBar>
        <BottomItem>
          <svg width="16" height="14" viewBox="0 0 16 14" fill="#7b7b7b"><path d="M0 0h3v3H0zM5 0h11v3H5zM0 5h3v3H0zM5 5h11v3H5zM0 10h3v3H0zM5 10h11v3H5z" /></svg>
          <span><u>6</u>: TODO</span>
        </BottomItem>
        <BottomItem>
          <DbStack w={17} h={20} check c="#7b7b7b" />
          Database Changes
        </BottomItem>
        <BottomItem>
          <svg width="16" height="18" viewBox="0 0 16 18"><path d="M8 0l8 4.5v9L8 18l-8-4.5v-9z" fill="#7b7b7b" /><path d="M6 6l5 3-5 3z" fill="#f2f2f2" /></svg>
          <span><u>8</u>: Services</span>
        </BottomItem>
        <EventLog>
          <svg width="16" height="16"><rect width="16" height="16" rx="3" fill="#59a869" /></svg>
          Event Log
        </EventLog>
      </BottomBar>

      <StatusBar>
        <svg width="14" height="14" viewBox="0 0 14 14" fill="none" stroke="#7b7b7b"><path d="M3.5.5h10v10h-10zM1 3v10.5h10" /></svg>
        Connected to db_pupr (moments ago)
        <LockSlot>
          <svg width="15" height="15" viewBox="0 0 15 15"><rect x="5" y="7" width="10" height="8" fill="#7b7b7b" /><path d="M1 6V3a2.5 2.5 0 015 0v4" stroke="#7b7b7b" strokeWidth="1.6" fill="none" /></svg>
        </LockSlot>
      </StatusBar>

      <Taskbar>
        <StartButton><WinIcon s={21} c="#000" /></StartButton>
        <SearchBox>
          <FlipSearch size={22} color="#222" strokeWidth={1.4} />
          Type here to search
        </SearchBox>
        <TaskCell $w={64}>
          <svg width="20" height="24" viewBox="0 0 20 24" fill="none" stroke="#111" strokeWidth="1.4"><path d="M1 1h12M1 23h12M1 7h12v10H1zM18 2v3M18 10v2M18 20v3" /></svg>
        </TaskCell>
        <TaskCell><EdgeIcon /></TaskCell>
        <TaskCell $open><FolderIcon /></TaskCell>
        <TaskCell><MailIcon /><Badge>99+</Badge></TaskCell>
        <TaskCell><DropboxIcon /></TaskCell>
        <TaskCell><SublimeIcon /></TaskCell>
        <TaskCell><VscodeIcon /></TaskCell>
        <TaskCell><WinIcon /></TaskCell>
        <TaskCell><CircleApp /></TaskCell>
        <TaskCell><GoldIcon /></TaskCell>
        <TaskCell $open><FirefoxIcon /></TaskCell>
        <TaskCell $open><ZoomIcon /></TaskCell>
        <TaskCell $open><WindowAppIcon /></TaskCell>
        <TaskCell $open $active><LogoDG s={30} /></TaskCell>
        <Tray>
          <TrayItem $w={32}>
            <svg width="28" height="28" viewBox="0 0 28 28"><circle cx="13" cy="13" r="12" fill="#1090d8" /><text x="13" y="20" fontSize="20" fontWeight="700" textAnchor="middle" fill="#fff" fontFamily="Open Sans, sans-serif">?</text><circle cx="21" cy="21" r="6" fill="#f5a623" /><rect x="20.2" y="18" width="1.6" height="6" fill="#fff" /></svg>
          </TrayItem>
          <TrayItem $w={60} $ml={17}>
            <svg width="30" height="20" viewBox="0 0 30 20" fill="none" stroke="#111" strokeWidth="1.6"><path d="M1 1h24v18H3a2 2 0 01-2-2zM25 4h4v13a2 2 0 01-2 2h-2" /><path d="M5 7h7v6H5zM15 6h7M15 10h7M15 14h7" /></svg>
          </TrayItem>
          <TrayItem $w={44} $ml={-10}>30°C</TrayItem>
          <TrayItem $w={36} $ml={8}><ChevronUp size={20} color="#222" /></TrayItem>
          <TrayItem $w={28}>
            <svg width="22" height="22" viewBox="0 0 22 22"><path d="M3 15a4 4 0 01.5-8 6 6 0 0111 0 4 4 0 012 8z" fill="#777" /><circle cx="15" cy="15" r="6" fill="#d9232e" /><path d="M12.5 12.5l5 5M17.5 12.5l-5 5" stroke="#fff" strokeWidth="1.4" /></svg>
          </TrayItem>
          <TrayItem $w={32}>
            <svg width="22" height="22" viewBox="0 0 22 22"><path d="M2 4l16-3v15L2 19z" fill="none" stroke="#111" strokeWidth="1.3" /><path d="M6 11a4 4 0 016-3M12 11a3 3 0 01-5 2" stroke="#111" fill="none" /><circle cx="16" cy="17" r="4" fill="#2e6fbd" /></svg>
          </TrayItem>
          <TrayItem $w={30}>
            <svg width="20" height="14" viewBox="0 0 20 14"><rect x="4" y="1" width="15" height="12" fill="none" stroke="#111" /><rect x="5" y="2" width="5" height="10" fill="#111" /><path d="M0 4h4M0 8h4" stroke="#111" /></svg>
          </TrayItem>
          <TrayItem $w={31}><Wifi size={18} color="#222" strokeWidth={1.4} /></TrayItem>
          <TrayItem $w={27}><Volume1 size={20} color="#222" strokeWidth={1.2} /></TrayItem>
          <Clock>6:41<br />04/02/2022</Clock>
          <TrayItem $w={56}>
            <svg width="22" height="20" viewBox="0 0 22 20"><path d="M0 0h22v16H6l-3 4v-4H0z" fill="#111" /><path d="M5 5h12M5 8h12M5 11h12" stroke="#fff" /></svg>
            <NotifyCount>19</NotifyCount>
          </TrayItem>
        </Tray>
      </Taskbar>

      <Popup>
        <PopupIcon viewBox="0 0 17 17"><circle cx="8.5" cy="8.5" r="8.5" fill="#3d9ad6" /><rect x="7.5" y="7" width="2" height="6.5" fill="#fff" /><rect x="7.5" y="3.5" width="2" height="2" fill="#fff" /></PopupIcon>
        <PopupTitle>DataGrip 2020.1.5 available</PopupTitle>
        <PopupLink>Update...</PopupLink>
      </Popup>
    </Page>
  )
}
